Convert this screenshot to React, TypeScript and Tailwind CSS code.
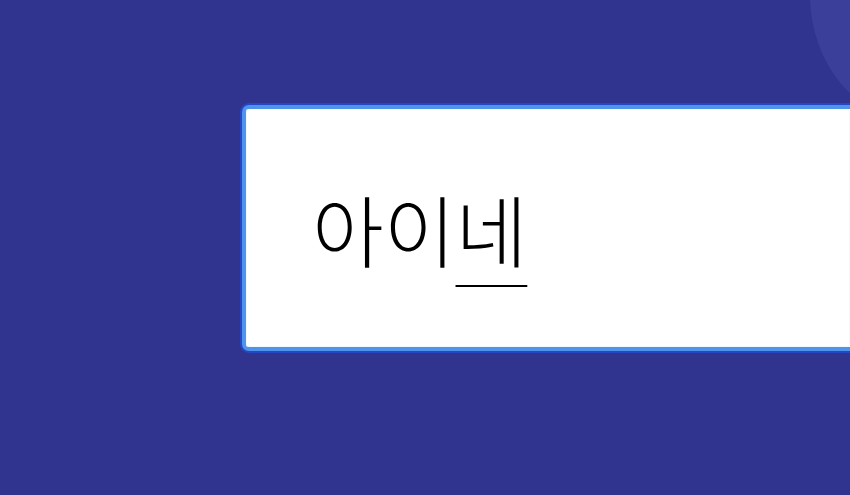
export default function App() {
  return (
    <div className="relative h-[495px] w-[850px] overflow-hidden bg-[#30348f]">
      {/* soft highlight in the top-right corner */}
      <div className="absolute -right-[170px] -top-[130px] h-[250px] w-[210px] rounded-[50%] bg-[#3b3f99]" />
      <div className="relative pl-[240px] pt-[103px]">
        <div className="rounded-l-[9px] bg-[#2448c4] py-[2px] pl-[2px]">
          <div className="rounded-l-[7px] border-y-[4px] border-l-[4px] border-[#4f93ea] bg-white">
            <div className="flex h-[238px] items-center pl-[66px] shadow-[inset_0_0_2px_#cfeaff]">
              <span
                className="text-[78px] font-light leading-none text-black"
                style={{ fontFamily: '"Noto Sans CJK KR", "Noto Sans", sans-serif' }}
              >
                아이<span className="underline decoration-[2px] underline-offset-[23px]">네</span>
              </span>
            </div>
          </div>
        </div>
      </div>
    </div>
  );
}
